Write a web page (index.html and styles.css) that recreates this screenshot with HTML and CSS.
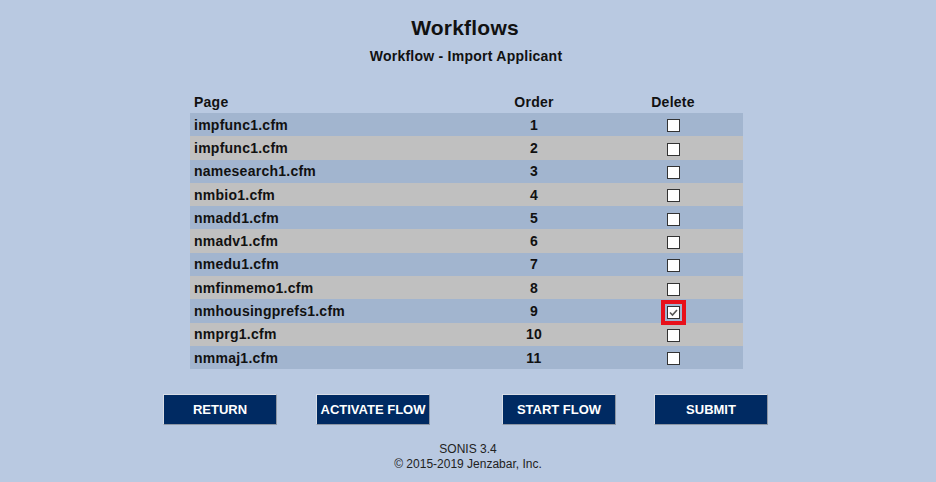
FILE: index.html
```html
<!DOCTYPE html>
<html lang="en">
<head>
  <meta charset="UTF-8">
  <title>Workflows</title>
  <link rel="stylesheet" href="styles.css">
</head>
<body>
  <h1>Workflows</h1>
  <h2>Workflow - Import Applicant</h2>

  <table class="flow">
    <colgroup>
      <col class="col-page">
      <col class="col-order">
      <col class="col-delete">
    </colgroup>
    <thead>
      <tr>
        <th class="page">Page</th>
        <th>Order</th>
        <th>Delete</th>
      </tr>
    </thead>
    <tbody>
      <tr><td class="page">impfunc1.cfm</td><td>1</td><td><input type="checkbox"></td></tr>
      <tr><td class="page">impfunc1.cfm</td><td>2</td><td><input type="checkbox"></td></tr>
      <tr><td class="page">namesearch1.cfm</td><td>3</td><td><input type="checkbox"></td></tr>
      <tr><td class="page">nmbio1.cfm</td><td>4</td><td><input type="checkbox"></td></tr>
      <tr><td class="page">nmadd1.cfm</td><td>5</td><td><input type="checkbox"></td></tr>
      <tr><td class="page">nmadv1.cfm</td><td>6</td><td><input type="checkbox"></td></tr>
      <tr><td class="page">nmedu1.cfm</td><td>7</td><td><input type="checkbox"></td></tr>
      <tr><td class="page">nmfinmemo1.cfm</td><td>8</td><td><input type="checkbox"></td></tr>
      <tr><td class="page">nmhousingprefs1.cfm</td><td>9</td><td><input type="checkbox" class="focused" checked></td></tr>
      <tr><td class="page">nmprg1.cfm</td><td>10</td><td><input type="checkbox"></td></tr>
      <tr><td class="page">nmmaj1.cfm</td><td>11</td><td><input type="checkbox"></td></tr>
    </tbody>
  </table>

  <div class="buttons">
    <button class="return">RETURN</button>
    <button>ACTIVATE FLOW</button>
    <button class="wide-gap">START FLOW</button>
    <button>SUBMIT</button>
  </div>

  <div class="footer">
    SONIS 3.4<br>
    &copy; 2015-2019 Jenzabar, Inc.
  </div>
</body>
</html>
```

FILE: styles.css
```css
body {
  margin: 0;
  background: #b9c9e1;
  font-family: "Liberation Sans", Arial, sans-serif;
  color: #111;
  text-align: center;
}
h1 {
  font-size: 21px;
  letter-spacing: 0.2px;
  line-height: 24px;
  margin: 16px 0 0;
  padding-right: 6px;
}
h2 {
  font-size: 14px;
  letter-spacing: 0.25px;
  line-height: 18px;
  margin: 7px 0 0;
  padding-right: 4px;
}
.flow {
  width: 553px;
  margin: 26px 0 0 190px;
  border-collapse: collapse;
  table-layout: fixed;
}
.col-page { width: 275px; }
.col-order { width: 138px; }
.col-delete { width: 140px; }
.flow th, .flow td {
  font-size: 14px;
  font-weight: bold;
  letter-spacing: 0.25px;
  padding: 0 4px;
  text-align: center;
}
.flow th {
  height: 22px;
}
.flow td {
  height: 23.3px;
  line-height: 16px;
}
.flow th.page, .flow td.page {
  text-align: left;
}
.flow tbody tr:nth-child(odd) {
  background: #a2b5cf;
}
.flow tbody tr:nth-child(even) {
  background: #c0c0c0;
}
.flow input {
  appearance: none;
  width: 13px;
  height: 13px;
  margin: 0;
  border: 1px solid #333;
  background: #fff;
  vertical-align: middle;
}
.flow input:checked {
  background: #fff url("data:image/svg+xml,%3Csvg xmlns='http://www.w3.org/2000/svg' width='11' height='11'%3E%3Cpath d='M2 5.5l2.5 2.5 4.5-5' fill='none' stroke='%23555' stroke-width='1.6'/%3E%3C/svg%3E") no-repeat center;
}
.flow input.focused {
  outline: 4px solid #e8101a;
  outline-offset: 2px;
}
.buttons {
  display: flex;
  justify-content: center;
  gap: 38px;
  margin-top: 25px;
  padding-right: 5px;
}
.buttons button {
  width: 114px;
  height: 31px;
  background: #002a62;
  color: #fff;
  border: 1px solid #d8dde6;
  border-right-color: #8d96a4;
  border-bottom-color: #8d96a4;
  font-family: "Liberation Sans", Arial, sans-serif;
  font-size: 13px;
  font-weight: bold;
  white-space: nowrap;
  padding: 0;
}
.buttons .return {
  margin-right: 1px;
}
.buttons .wide-gap {
  margin-left: 34px;
}
.footer {
  margin-top: 17px;
  font-size: 12px;
  line-height: 15px;
  color: #222;
}
```
